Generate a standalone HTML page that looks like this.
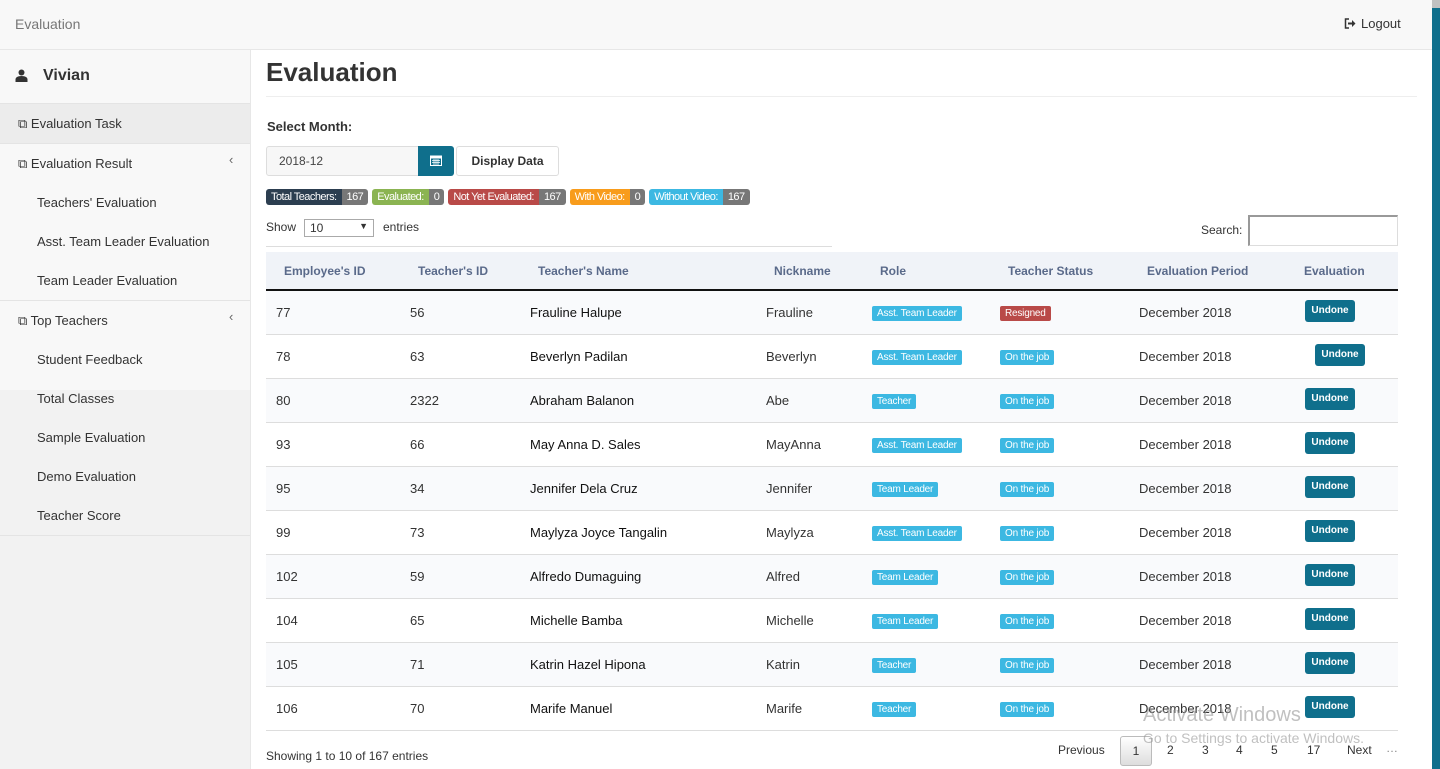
<!DOCTYPE html>
<html><head><meta charset="utf-8"><style>
*{box-sizing:border-box;margin:0;padding:0}
body{width:1440px;height:769px;overflow:hidden;font-family:"Liberation Sans",sans-serif;font-size:13px;color:#333;background:#fff;position:relative}
.a{position:absolute;white-space:nowrap}
.top{left:0;top:0;width:1432px;height:50px;background:#f8f8f8;border-bottom:1px solid #e7e7e7}
.side{left:0;top:50px;width:251px;height:719px;background:#f2f2f2;border-right:1px solid #e7e7e7}
.sb{left:1432px;top:8px;width:8px;height:761px;background:#0f6f8c}
.sbt{left:1432px;top:0;width:8px;height:8px;background:#c1c1c1}
.nav{color:#333;font-size:13px}
.lbl{font-size:11px;color:#fff;padding:0 5px;height:16px;line-height:16px;letter-spacing:-0.55px;display:block}
.row{left:266px;width:1132px;height:44px;border-bottom:1px solid #ddd}
.th{font-weight:bold;color:#5a6a8a;font-size:12px;top:264px}
.bl{font-size:10px;color:#fff;padding:0 5px;height:15px;line-height:15px;border-radius:2px;background:#3cb8e2;letter-spacing:-0.2px}
.btn{font-size:10px;font-weight:bold;color:#fff;background:#0f6f8c;width:50px;height:22px;line-height:21px;text-align:center;border-radius:3px}
</style></head><body>
<div class="a top"></div>
<div class="a" style="left:15px;top:16px;font-size:14px;color:#777">Evaluation</div>
<div class="a" style="left:1344px;top:16px;font-size:13px;color:#333"><svg width="12" height="11" viewBox="0 0 12 11" style="vertical-align:-1px;margin-right:5px"><path d="M5 1H1.5v9H5" fill="none" stroke="#333" stroke-width="1.5"/><path d="M4 4.5h4V2l3.5 3.5L8 9V6.5H4z" fill="#333"/></svg>Logout</div>
<div class="a sbt"></div><div class="a sb"></div>
<div class="a side"></div>
<div class="a" style="left:0;top:50px;width:250px;height:340px;background:#f8f8f8"></div>
<div class="a" style="left:0;top:103px;width:250px;height:41px;background:#ececec;border-top:1px solid #e4e4e4;border-bottom:1px solid #e4e4e4"></div>
<div class="a" style="left:0;top:300px;width:250px;border-top:1px solid #e4e4e4"></div>
<div class="a" style="left:0;top:535px;width:250px;border-top:1px solid #e4e4e4"></div>
<div class="a" style="left:15px;top:69px"><svg width="13" height="13" viewBox="0 0 13 13"><circle cx="6.5" cy="3.5" r="3" fill="#333"/><path d="M0.5 13v-2.5c0-2 2-3.5 6-3.5s6 1.5 6 3.5V13z" fill="#333"/></svg></div>
<div class="a" style="left:43px;top:67px;font-size:16px;font-weight:bold;color:#333">Vivian</div>
<div class="a nav" style="left:18px;top:116px">⧉ Evaluation Task</div>
<div class="a nav" style="left:18px;top:156px">⧉ Evaluation Result</div>
<div class="a nav" style="left:229px;top:152px;color:#666">‹</div>
<div class="a nav" style="left:37px;top:195px">Teachers' Evaluation</div>
<div class="a nav" style="left:37px;top:234px">Asst. Team Leader Evaluation</div>
<div class="a nav" style="left:37px;top:273px">Team Leader Evaluation</div>
<div class="a nav" style="left:18px;top:313px">⧉ Top Teachers</div>
<div class="a nav" style="left:229px;top:309px;color:#666">‹</div>
<div class="a nav" style="left:37px;top:352px">Student Feedback</div>
<div class="a nav" style="left:37px;top:391px">Total Classes</div>
<div class="a nav" style="left:37px;top:430px">Sample Evaluation</div>
<div class="a nav" style="left:37px;top:469px">Demo Evaluation</div>
<div class="a nav" style="left:37px;top:508px">Teacher Score</div>

<div class="a" style="left:266px;top:57px;font-size:26px;font-weight:bold;color:#333">Evaluation</div>
<div class="a" style="left:266px;top:96px;width:1151px;border-top:1px solid #eee"></div>
<div class="a" style="left:267px;top:119px;font-weight:bold;font-size:13px">Select Month:</div>
<div class="a" style="left:266px;top:146px;width:153px;height:30px;border:1px solid #ddd;border-radius:3px 0 0 3px;background:#f7f7f7;padding:7px 12px;font-size:12px;color:#444">2018-12</div>
<div class="a" style="left:418px;top:146px;width:36px;height:30px;background:#0f6f8c;border-radius:0 3px 3px 0"><svg width="12" height="11" viewBox="0 0 12 11" style="position:absolute;left:12px;top:9px"><rect x="0.5" y="1" width="11" height="9.5" fill="none" stroke="#fff"/><rect x="0.5" y="1" width="11" height="2.5" fill="#fff"/><path d="M2 5.5h8M2 7.5h8M4 4v6M6 4v6M8 4v6" stroke="#fff" stroke-width="0.8"/></svg></div>
<div class="a" style="left:456px;top:146px;width:103px;height:30px;border:1px solid #ddd;border-radius:3px;text-align:center;line-height:28px;font-size:12px;font-weight:bold;color:#333">Display Data</div>

<div class="a" style="left:266px;top:189px;display:flex;gap:4px">
<span style="display:flex;border-radius:3px;overflow:hidden"><span class="lbl" style="background:#2c3e50">Total Teachers:</span><span class="lbl" style="background:#777">167</span></span>
<span style="display:flex;border-radius:3px;overflow:hidden"><span class="lbl" style="background:#8bb452">Evaluated:</span><span class="lbl" style="background:#777">0</span></span>
<span style="display:flex;border-radius:3px;overflow:hidden"><span class="lbl" style="background:#b94a48">Not Yet Evaluated:</span><span class="lbl" style="background:#777">167</span></span>
<span style="display:flex;border-radius:3px;overflow:hidden"><span class="lbl" style="background:#f89c1c">With Video:</span><span class="lbl" style="background:#777">0</span></span>
<span style="display:flex;border-radius:3px;overflow:hidden"><span class="lbl" style="background:#3cb8e2">Without Video:</span><span class="lbl" style="background:#777">167</span></span>
</div>
<div class="a" style="left:266px;top:220px;font-size:12px">Show</div>
<div class="a" style="left:304px;top:219px;width:70px;height:18px;border:1px solid #aaa;font-size:12px;padding:1px 5px">10<span style="position:absolute;right:5px;top:1px;font-size:9px">▼</span></div>
<div class="a" style="left:383px;top:220px;font-size:12px">entries</div>
<div class="a" style="left:266px;top:246px;width:566px;border-top:1px solid #ddd"></div>
<div class="a" style="left:1201px;top:223px;font-size:12px">Search:</div>
<div class="a" style="left:1248px;top:215px;width:150px;height:31px;border:1px solid #ddd;border-top:2px solid #999;border-left:2px solid #999"></div>

<div class="a" style="left:266px;top:252px;width:1132px;height:39px;background:#f0f3f8;border-bottom:2px solid #111"></div>
<div class="a th" style="left:284px">Employee's ID</div>
<div class="a th" style="left:418px">Teacher's ID</div>
<div class="a th" style="left:538px">Teacher's Name</div>
<div class="a th" style="left:774px">Nickname</div>
<div class="a th" style="left:880px">Role</div>
<div class="a th" style="left:1008px">Teacher Status</div>
<div class="a th" style="left:1147px">Evaluation Period</div>
<div class="a th" style="left:1304px">Evaluation</div>

<div class="a row" style="top:291px;background:#f9fafc"></div>
<div class="a row" style="top:335px"></div>
<div class="a row" style="top:379px;background:#f9fafc"></div>
<div class="a row" style="top:423px"></div>
<div class="a row" style="top:467px;background:#f9fafc"></div>
<div class="a row" style="top:511px"></div>
<div class="a row" style="top:555px;background:#f9fafc"></div>
<div class="a row" style="top:599px"></div>
<div class="a row" style="top:643px;background:#f9fafc"></div>
<div class="a row" style="top:687px"></div>

<div class="a" style="left:276px;top:305px">77</div><div class="a" style="left:410px;top:305px">56</div><div class="a" style="left:530px;top:305px;color:#111">Frauline Halupe</div><div class="a" style="left:766px;top:305px">Frauline</div><div class="a bl" style="left:872px;top:306px">Asst. Team Leader</div><div class="a bl" style="left:1000px;top:306px;background:#b94a48">Resigned</div><div class="a" style="left:1139px;top:305px">December 2018</div><div class="a btn" style="left:1305px;top:300px">Undone</div>
<div class="a" style="left:276px;top:349px">78</div><div class="a" style="left:410px;top:349px">63</div><div class="a" style="left:530px;top:349px;color:#111">Beverlyn Padilan</div><div class="a" style="left:766px;top:349px">Beverlyn</div><div class="a bl" style="left:872px;top:350px">Asst. Team Leader</div><div class="a bl" style="left:1000px;top:350px">On the job</div><div class="a" style="left:1139px;top:349px">December 2018</div><div class="a btn" style="left:1315px;top:344px">Undone</div>
<div class="a" style="left:276px;top:393px">80</div><div class="a" style="left:410px;top:393px">2322</div><div class="a" style="left:530px;top:393px;color:#111">Abraham Balanon</div><div class="a" style="left:766px;top:393px">Abe</div><div class="a bl" style="left:872px;top:394px">Teacher</div><div class="a bl" style="left:1000px;top:394px">On the job</div><div class="a" style="left:1139px;top:393px">December 2018</div><div class="a btn" style="left:1305px;top:388px">Undone</div>
<div class="a" style="left:276px;top:437px">93</div><div class="a" style="left:410px;top:437px">66</div><div class="a" style="left:530px;top:437px;color:#111">May Anna D. Sales</div><div class="a" style="left:766px;top:437px">MayAnna</div><div class="a bl" style="left:872px;top:438px">Asst. Team Leader</div><div class="a bl" style="left:1000px;top:438px">On the job</div><div class="a" style="left:1139px;top:437px">December 2018</div><div class="a btn" style="left:1305px;top:432px">Undone</div>
<div class="a" style="left:276px;top:481px">95</div><div class="a" style="left:410px;top:481px">34</div><div class="a" style="left:530px;top:481px;color:#111">Jennifer Dela Cruz</div><div class="a" style="left:766px;top:481px">Jennifer</div><div class="a bl" style="left:872px;top:482px">Team Leader</div><div class="a bl" style="left:1000px;top:482px">On the job</div><div class="a" style="left:1139px;top:481px">December 2018</div><div class="a btn" style="left:1305px;top:476px">Undone</div>
<div class="a" style="left:276px;top:525px">99</div><div class="a" style="left:410px;top:525px">73</div><div class="a" style="left:530px;top:525px;color:#111">Maylyza Joyce Tangalin</div><div class="a" style="left:766px;top:525px">Maylyza</div><div class="a bl" style="left:872px;top:526px">Asst. Team Leader</div><div class="a bl" style="left:1000px;top:526px">On the job</div><div class="a" style="left:1139px;top:525px">December 2018</div><div class="a btn" style="left:1305px;top:520px">Undone</div>
<div class="a" style="left:276px;top:569px">102</div><div class="a" style="left:410px;top:569px">59</div><div class="a" style="left:530px;top:569px;color:#111">Alfredo Dumaguing</div><div class="a" style="left:766px;top:569px">Alfred</div><div class="a bl" style="left:872px;top:570px">Team Leader</div><div class="a bl" style="left:1000px;top:570px">On the job</div><div class="a" style="left:1139px;top:569px">December 2018</div><div class="a btn" style="left:1305px;top:564px">Undone</div>
<div class="a" style="left:276px;top:613px">104</div><div class="a" style="left:410px;top:613px">65</div><div class="a" style="left:530px;top:613px;color:#111">Michelle Bamba</div><div class="a" style="left:766px;top:613px">Michelle</div><div class="a bl" style="left:872px;top:614px">Team Leader</div><div class="a bl" style="left:1000px;top:614px">On the job</div><div class="a" style="left:1139px;top:613px">December 2018</div><div class="a btn" style="left:1305px;top:608px">Undone</div>
<div class="a" style="left:276px;top:657px">105</div><div class="a" style="left:410px;top:657px">71</div><div class="a" style="left:530px;top:657px;color:#111">Katrin Hazel Hipona</div><div class="a" style="left:766px;top:657px">Katrin</div><div class="a bl" style="left:872px;top:658px">Teacher</div><div class="a bl" style="left:1000px;top:658px">On the job</div><div class="a" style="left:1139px;top:657px">December 2018</div><div class="a btn" style="left:1305px;top:652px">Undone</div>
<div class="a" style="left:276px;top:701px">106</div><div class="a" style="left:410px;top:701px">70</div><div class="a" style="left:530px;top:701px;color:#111">Marife Manuel</div><div class="a" style="left:766px;top:701px">Marife</div><div class="a bl" style="left:872px;top:702px">Teacher</div><div class="a bl" style="left:1000px;top:702px">On the job</div><div class="a" style="left:1139px;top:701px">December 2018</div><div class="a btn" style="left:1305px;top:696px">Undone</div>

<div class="a" style="left:266px;top:749px;font-size:12px">Showing 1 to 10 of 167 entries</div>
<div class="a" style="left:1058px;top:743px;font-size:12px;color:#333">Previous</div>
<div class="a" style="left:1120px;top:736px;width:32px;height:30px;border:1px solid #bbb;border-radius:3px;background:linear-gradient(#fff,#ddd);text-align:center;line-height:28px;font-size:12px">1</div>
<div class="a" style="left:1167px;top:743px;font-size:12px">2</div>
<div class="a" style="left:1202px;top:743px;font-size:12px">3</div>
<div class="a" style="left:1236px;top:743px;font-size:12px">4</div>
<div class="a" style="left:1271px;top:743px;font-size:12px">5</div>
<div class="a" style="left:1307px;top:743px;font-size:12px">17</div>
<div class="a" style="left:1347px;top:743px;font-size:12px">Next</div>
<div class="a" style="left:1386px;top:741px;font-size:12px;color:#888">…</div>
<div class="a" style="left:1143px;top:704px;font-size:20px;color:rgba(150,150,150,.6)">Activate Windows</div>
<div class="a" style="left:1143px;top:730px;font-size:14px;color:rgba(150,150,150,.6)">Go to Settings to activate Windows.</div>
</body></html>
